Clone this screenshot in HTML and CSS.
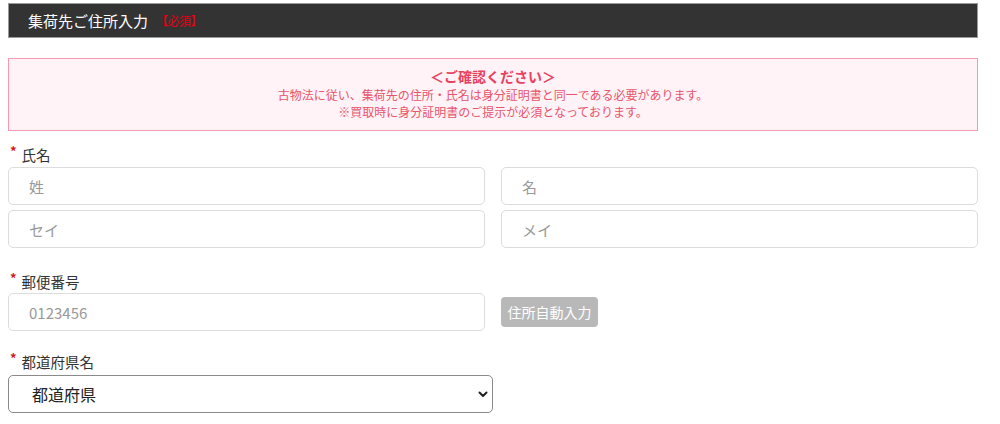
FILE: index.html
```html
<!DOCTYPE html>
<html lang="ja">
<head>
<meta charset="utf-8">
<link rel="stylesheet" href="styles.css">
</head>
<body>
<div class="page">
  <div class="section-head">
    <span class="section-title">集荷先ご住所入力</span>
    <span class="req">【必須】</span>
  </div>
  <div class="notice">
    <p class="notice-title">＜ご確認ください＞</p>
    <p class="notice-line">古物法に従い、集荷先の住所・氏名は身分証明書と同一である必要があります。</p>
    <p class="notice-line">※買取時に身分証明書のご提示が必須となっております。</p>
  </div>

  <div class="field field-name">
    <div class="label"><span class="ast">*</span>氏名</div>
    <div class="grid2">
      <input class="text" type="text" placeholder="姓">
      <input class="text" type="text" placeholder="名">
      <input class="text" type="text" placeholder="セイ">
      <input class="text" type="text" placeholder="メイ">
    </div>
  </div>

  <div class="field field-zip">
    <div class="label"><span class="ast">*</span>郵便番号</div>
    <div class="grid2 zip-row">
      <input class="text" type="text" placeholder="0123456">
      <div><button class="auto-btn" type="button">住所自動入力</button></div>
    </div>
  </div>

  <div class="field field-pref">
    <div class="label"><span class="ast">*</span>都道府県名</div>
    <div class="select-wrap">
      <select class="pref">
        <option>都道府県</option>
      </select>
      <svg class="chev" width="10" height="7" viewBox="0 0 10 7"><path d="M1.5 1.5 L5 5 L8.5 1.5" fill="none" stroke="#222" stroke-width="2" stroke-linecap="round" stroke-linejoin="round"/></svg>
    </div>
  </div>
</div>
</body>
</html>
```
FILE: styles.css
```css
* { box-sizing: border-box; }
body {
  margin: 0;
  background: #fff;
  font-family: "Noto Sans CJK JP", "Noto Sans", sans-serif;
  color: #333;
}
.page {
  width: 970px;
  margin-left: 8px;
  padding-top: 3px;
}
.section-head {
  height: 35px;
  background: #333;
  border: 1px solid #9a9a9a;
  display: flex;
  align-items: center;
  padding-left: 19px;
}
.section-title {
  color: #fff;
  font-size: 15px;
  line-height: 20px;
}
.req {
  color: #e60012;
  font-size: 12px;
  margin-left: 8px;
  letter-spacing: -0.5px;
}
.notice {
  margin-top: 20px;
  height: 73px;
  border: 1px solid #f59ab1;
  background: #fff3f7;
  text-align: center;
  color: #e9546b;
  padding-top: 8px;
}
.notice p { margin: 0; }
.notice-title {
  font-size: 14px;
  font-weight: bold;
  line-height: 19px;
  color: #e8415f;
}
.notice-line {
  font-size: 12px;
  line-height: 17px;
}
.label {
  font-size: 14.5px;
  line-height: 20px;
  color: #333;
  padding-left: 2px;
  margin-bottom: 2px;
}
.ast {
  color: #d7171f;
  font-weight: bold;
  font-size: 13px;
  vertical-align: top;
  line-height: 12px;
  margin-right: 5px;
}
.field-name { margin-top: 14px; }
.field-zip { margin-top: 24px; }
.field-zip .label { margin-bottom: 1px; }
.field-pref { margin-top: 21px; }
.field-pref .label { margin-bottom: 3px; }
.grid2 {
  display: grid;
  grid-template-columns: 477px 477px;
  column-gap: 16px;
  row-gap: 5px;
}
.text {
  height: 38px;
  border: 1px solid #dcdcdc;
  border-radius: 5px;
  padding: 0 20px;
  font-family: "Noto Sans CJK JP", "Noto Sans", sans-serif;
  font-size: 15px;
  color: #333;
  outline: none;
}
.text::placeholder { color: #999; }
.zip-row { align-items: center; }
.auto-btn {
  height: 30px;
  width: 97px;
  border: none;
  border-radius: 4px;
  background: #b8b8b8;
  color: #fff;
  font-family: "Noto Sans CJK JP", "Noto Sans", sans-serif;
  font-size: 14px;
  padding: 0;
}
.select-wrap {
  position: relative;
  width: 485px;
}
.pref {
  -webkit-appearance: none;
  appearance: none;
  display: block;
  width: 485px;
  height: 38px;
  border: 1px solid #8a8a8a;
  border-radius: 5px;
  padding-left: 23px;
  font-family: "Noto Sans CJK JP", "Noto Sans", sans-serif;
  font-size: 16px;
  color: #222;
  background: #fff;
  outline: none;
}
.chev {
  position: absolute;
  right: 5px;
  top: 16px;
  pointer-events: none;
}
```
